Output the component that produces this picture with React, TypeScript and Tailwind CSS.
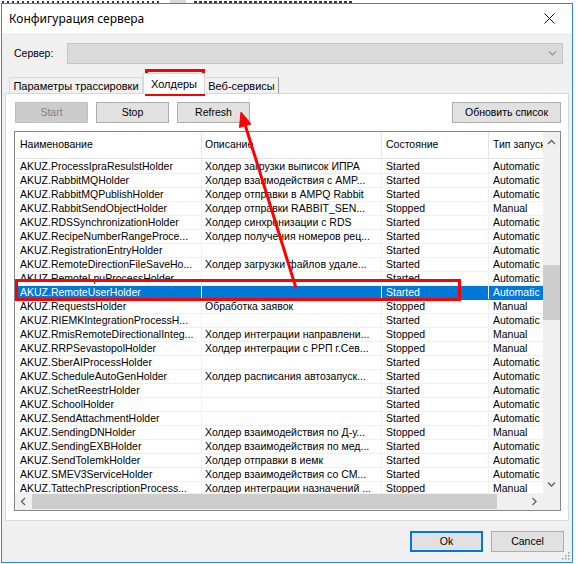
import React from "react";

type Row = [string, string, string, string];

const rows: Row[] = [
  ["AKUZ.ProcessIpraResulstHolder", "Холдер загрузки выписок ИПРА", "Started", "Automatic"],
  ["AKUZ.RabbitMQHolder", "Холдер взаимодействия с AMP...", "Started", "Automatic"],
  ["AKUZ.RabbitMQPublishHolder", "Холдер отправки в AMPQ Rabbit", "Started", "Automatic"],
  ["AKUZ.RabbitSendObjectHolder", "Холдер отправки RABBIT_SEN...", "Stopped", "Manual"],
  ["AKUZ.RDSSynchronizationHolder", "Холдер синхронизации с RDS", "Started", "Automatic"],
  ["AKUZ.RecipeNumberRangeProce...", "Холдер получения номеров рец...", "Started", "Automatic"],
  ["AKUZ.RegistrationEntryHolder", "", "Started", "Automatic"],
  ["AKUZ.RemoteDirectionFileSaveHo...", "Холдер загрузки файлов удале...", "Started", "Automatic"],
  ["AKUZ.RemoteLpuProcessHolder", "", "Started", "Automatic"],
  ["AKUZ.RemoteUserHolder", "", "Started", "Automatic"],
  ["AKUZ.RequestsHolder", "Обработка заявок", "Stopped", "Manual"],
  ["AKUZ.RIEMKIntegrationProcessH...", "", "Started", "Automatic"],
  ["AKUZ.RmisRemoteDirectionalInteg...", "Холдер интеграции направлени...", "Stopped", "Manual"],
  ["AKUZ.RRPSevastopolHolder", "Холдер интеграции с РРП г.Сев...", "Stopped", "Manual"],
  ["AKUZ.SberAIProcessHolder", "", "Started", "Automatic"],
  ["AKUZ.ScheduleAutoGenHolder", "Холдер расписания автозапуск...", "Started", "Automatic"],
  ["AKUZ.SchetReestrHolder", "", "Started", "Automatic"],
  ["AKUZ.SchoolHolder", "", "Started", "Automatic"],
  ["AKUZ.SendAttachmentHolder", "", "Started", "Automatic"],
  ["AKUZ.SendingDNHolder", "Холдер взаимодействия по Д-у...", "Stopped", "Manual"],
  ["AKUZ.SendingEXBHolder", "Холдер взаимодействия по мед...", "Started", "Automatic"],
  ["AKUZ.SendToIemkHolder", "Холдер отправки в иемк", "Started", "Automatic"],
  ["AKUZ.SMEV3ServiceHolder", "Холдер взаимодействия со СМ...", "Started", "Automatic"],
  ["AKUZ.TattechPrescriptionProcess...", "Холдер интеграции назначений ...", "Stopped", "Manual"],
];

const selected = 9;

function Chevron({ dir }: { dir: "up" | "down" | "left" | "right" | "combo" }) {
  const pts = {
    up: "1,5 4.5,1.5 8,5",
    down: "1,1.5 4.5,5 8,1.5",
    left: "5,1 1.5,4.5 5,8",
    right: "1.5,1 5,4.5 1.5,8",
    combo: "1,1.5 4.5,5 8,1.5",
  }[dir];
  const vertical = dir === "left" || dir === "right";
  return (
    <svg width={vertical ? 7 : 9} height={vertical ? 9 : 7} viewBox={vertical ? "0 0 7 9" : "0 0 9 7"}>
      <polyline
        points={pts}
        fill="none"
        stroke={dir === "combo" ? "#9a9a9a" : "#606060"}
        strokeWidth="1.3"
      />
    </svg>
  );
}

function Button({
  children,
  w,
  disabled,
  primary,
}: {
  children: React.ReactNode;
  w: string;
  disabled?: boolean;
  primary?: boolean;
}) {
  const tone = disabled
    ? "border border-[#bfbfbf] bg-[#cccccc] text-[#838383]"
    : primary
      ? "border-2 border-[#0078d7] bg-[#e1e1e1]"
      : "border border-[#adadad] bg-[#e1e1e1]";
  return (
    <div className={`flex h-[21px] shrink-0 items-center justify-center ${w} ${tone}`}>
      {children}
    </div>
  );
}

const cols = ["w-[187px] pl-[5px]", "w-[180px] pl-[3px]", "w-[107px] pl-[4px]", "w-[120px] pl-[4px]"];

function HolderList() {
  return (
    <div className="mt-[8px] flex h-[380px] w-[547px] flex-col border border-[#828790] bg-white">
      <div className="flex h-[361px]">
        <div className="w-[528px] overflow-hidden">
          <div className="flex h-[27px] border-b border-[#e5e5e5]">
            {["Наименование", "Описание", "Состояние", "Тип запуска"].map((h, i) => (
              <div
                key={h}
                className={`flex shrink-0 items-center overflow-hidden whitespace-nowrap border-r border-[#e5e5e5] ${cols[i]}`}
              >
                {h}
              </div>
            ))}
          </div>
          <div className="pt-px">
            {rows.map((r, ri) => {
              const sel = ri === selected;
              return (
                <div
                  key={r[0]}
                  className={`flex h-[14px] border-b ${
                    sel ? "border-[#0078d7] bg-[#0078d7] text-white" : "border-[#f0f0f0]"
                  }`}
                >
                  {r.map((c, ci) => (
                    <div
                      key={ci}
                      className={`shrink-0 overflow-hidden whitespace-nowrap border-r leading-[13px] ${
                        sel ? "border-white" : "border-[#f0f0f0]"
                      } ${cols[ci]}`}
                    >
                      {c}
                    </div>
                  ))}
                </div>
              );
            })}
          </div>
        </div>
        <div className="flex w-[17px] flex-col bg-[#f0f0f0]">
          <div className="flex h-[17px] items-center justify-center pt-[3px]">
            <Chevron dir="up" />
          </div>
          <div className="flex-1">
            <div className="mt-[116px] h-[55px] bg-[#cdcdcd]" />
          </div>
          <div className="flex h-[17px] items-center justify-center">
            <Chevron dir="down" />
          </div>
        </div>
      </div>
      <div className="flex h-[17px]">
        <div className="flex w-[528px] bg-[#f0f0f0]">
          <div className="flex w-[17px] items-center justify-center">
            <Chevron dir="left" />
          </div>
          <div className="flex-1">
            <div className="mt-px h-[15px] w-[465px] bg-[#cdcdcd]" />
          </div>
          <div className="flex w-[17px] items-center justify-center">
            <Chevron dir="right" />
          </div>
        </div>
        <div className="w-[17px] bg-[#f0f0f0]" />
      </div>
    </div>
  );
}

export default function App() {
  return (
    <div className="relative h-[564px] w-[577px] overflow-hidden bg-white font-['Liberation_Sans',Arial,sans-serif] text-[10.5px] text-black">
      <div className="flex h-[3px] gap-[8px] pl-[2px]">
        <div className="mt-px h-[2px] w-[160px] bg-[repeating-linear-gradient(90deg,#3a3a3a_0_2px,transparent_2px_5px)]" />
        <div className="h-[3px] w-[16px] bg-[#d8d8d8]" />
        <div className="mt-px h-[2px] w-[158px] bg-[repeating-linear-gradient(90deg,#3a3a3a_0_3px,transparent_3px_5px)]" />
      </div>
      <div className="ml-px flex h-[560px] w-[572px] flex-col border border-[#2b88d8]">
        <div className="flex h-[29px] items-center justify-between bg-white pl-[7px]">
          <span className="font-['Noto_Sans',sans-serif] text-[12px]">Конфигурация сервера</span>
          <div className="flex h-[29px] w-[46px] items-center justify-center">
            <svg width="11" height="11" viewBox="0 0 11 11">
              <path d="M0.5 0.5 L10.5 10.5 M10.5 0.5 L0.5 10.5" stroke="#111" strokeWidth="1" />
            </svg>
          </div>
        </div>
        <div className="relative flex flex-1 flex-col bg-[#f0f0f0]">
          <div className="mt-[10px] flex h-[21px] items-center">
            <div className="w-[65px] shrink-0 pl-[12px]">Сервер:</div>
            <div className="flex h-[21px] w-[496px] items-center justify-end border border-[#c4c4c4] bg-[#dadada] pr-[5px]">
              <Chevron dir="combo" />
            </div>
          </div>
          <div className="mt-[9px] flex h-[20px] items-end pl-[7px] text-[11px]">
            <div className="flex h-[16px] w-[134px] items-center justify-center border border-b-0 border-[#d9d9d9] bg-[#f0f0f0] pt-[1px]">
              Параметры трассировки
            </div>
            <div className="relative z-10 -mb-px flex h-[21px] w-[62px] items-center justify-center border border-b-0 border-[#d9d9d9] bg-white">
              Холдеры
            </div>
            <div className="flex h-[16px] w-[74px] items-center justify-center border border-b-0 border-l-0 border-r-[#9a9a9a] border-t-[#d9d9d9] bg-[#f0f0f0] pt-[1px]">
              Веб-сервисы
            </div>
          </div>
          <div className="ml-[3px] flex h-[428px] w-[564px] flex-col border border-[#d9d9d9] bg-white pl-[8px] pt-[8px]">
            <div className="flex pl-px pr-[7px]">
              <Button w="w-[73px]" disabled>
                Start
              </Button>
              <div className="ml-[8px]">
                <Button w="w-[73px]">Stop</Button>
              </div>
              <div className="ml-[8px]">
                <Button w="w-[73px]">Refresh</Button>
              </div>
              <div className="ml-auto">
                <Button w="w-[109px]">Обновить список</Button>
              </div>
            </div>
            <HolderList />
          </div>
          <div className="mt-[10px] flex justify-end gap-[8px] pr-[8px]">
            <Button w="w-[73px]" primary>
              Ok
            </Button>
            <Button w="w-[73px]">Cancel</Button>
          </div>
          <svg className="absolute bottom-[2px] right-[2px]" width="9" height="9" viewBox="0 0 9 9">
            {[
              [7, 1],
              [7, 4],
              [4, 4],
              [7, 7],
              [4, 7],
              [1, 7],
            ].map(([x, y]) => (
              <rect key={`${x}-${y}`} x={x} y={y} width="1.5" height="1.5" fill="#a0a0a0" />
            ))}
          </svg>
        </div>
      </div>

      {/* annotations */}
      <div className="pointer-events-none absolute left-[145px] top-[69px] h-[27px] w-[60px] border-[3px] border-[#ff0000]" />
      <div className="pointer-events-none absolute left-[15px] top-[279px] h-[22px] w-[446px] border-[3px] border-[#ff0000]" />
      <svg className="pointer-events-none absolute left-0 top-0" width="577" height="564">
        <line x1="296" y1="288" x2="245.5" y2="126" stroke="#ff0000" strokeWidth="3" />
        <polygon points="241,112 251,124 239.5,127.5" fill="#ff0000" stroke="#ff0000" strokeWidth="1" />
      </svg>
    </div>
  );
}
